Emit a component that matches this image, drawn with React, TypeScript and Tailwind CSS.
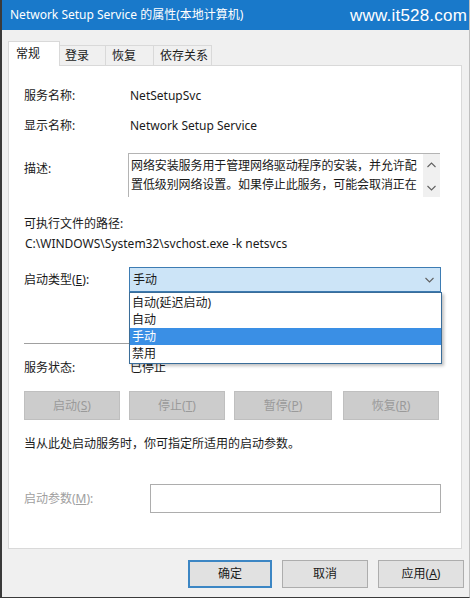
import React from 'react';

const font = "font-['Noto_Sans','Noto_Sans_CJK_SC',sans-serif]";

interface ActionButton {
    label: string;
    key: string;
    width: string;
}

const serviceButtons: ActionButton[] = [
    { label: '启动', key: 'S', width: 'w-[96px]' },
    { label: '停止', key: 'T', width: 'w-[96px]' },
    { label: '暂停', key: 'P', width: 'w-[98px]' },
    { label: '恢复', key: 'R', width: 'w-[96px]' },
];

const startupTypes = ['自动(延迟启动)', '自动', '手动', '禁用'];

const Chevron: React.FC<{ up?: boolean }> = ({ up }) => (
    <svg width="9" height="6" viewBox="0 0 9 6" className="block">
        <path
            d={up ? 'M0.5 5 L4.5 1 L8.5 5' : 'M0.5 1 L4.5 5 L8.5 1'}
            fill="none"
            stroke="#606060"
            strokeWidth="1.1"
        />
    </svg>
);

const App: React.FC = () => {
    return (
        <div className={`w-[472px] h-[598px] bg-white ${font} text-[12px] text-[#1a1a1a] leading-none`}>
            <div className="w-[470px] h-[598px] flex flex-col bg-[#f0f0f0] border-l-2 border-b border-r border-l-[#3a3a3a] border-b-[#3a3a3a] border-r-[#bfbfbf]">
                {/* title bar */}
                <div className="h-[30px] shrink-0 bg-[#1979ca] flex items-center justify-between pl-[8px] pr-[2px] text-white">
                    <span className="text-[12px]">Network Setup Service 的属性(本地计算机)</span>
                    <span className="text-[17px] font-['Liberation_Sans',sans-serif] tracking-[0.2px]">www.it528.com</span>
                </div>

                {/* tabs */}
                <div className="pl-[6px] pt-[11px] flex items-end h-[35px] shrink-0">
                    <div className="relative z-10 h-[25px] w-[52px] -mb-px bg-white border border-b-0 border-[#d9d9d9] flex items-center pl-[7px]">常规</div>
                    <div className="h-[20px] w-[46px] bg-[#f0f0f0] border border-l-0 border-b-0 border-[#d9d9d9] flex items-center pl-[5px]">登录</div>
                    <div className="h-[20px] w-[48px] bg-[#f0f0f0] border border-l-0 border-b-0 border-[#d9d9d9] flex items-center pl-[6px]">恢复</div>
                    <div className="h-[20px] w-[58px] bg-[#f0f0f0] border border-l-0 border-b-0 border-[#d9d9d9] flex items-center pl-[6px]">依存关系</div>
                </div>

                {/* panel */}
                <div className="ml-[6px] w-[454px] h-[484px] shrink-0 bg-white border border-[#d9d9d9] flex flex-col pl-[15px] pt-[20px]">
                    <div className="h-[20px] flex items-center">
                        <span className="w-[106px]">服务名称:</span>
                        <span>NetSetupSvc</span>
                    </div>
                    <div className="h-[20px] mt-[10px] flex items-center">
                        <span className="w-[106px]">显示名称:</span>
                        <span>Network Setup Service</span>
                    </div>

                    <div className="h-[44px] mt-[17px] flex">
                        <span className="w-[104px] pt-[10px]">描述:</span>
                        <div className="w-[312px] h-[44px] border-t border-l border-[#b4b4b4] flex">
                            <div className="flex-1 pl-[2px] pt-[2px] leading-[19px] text-[12px] tracking-[-0.1px]">
                                网络安装服务用于管理网络驱动程序的安装，并允许配
                                <br />
                                置低级别网络设置。如果停止此服务，可能会取消正在
                            </div>
                            <div className="w-[17px] bg-[#f0f0f0] flex flex-col items-center justify-between pt-[8px] pb-[6px]">
                                <Chevron up />
                                <Chevron />
                            </div>
                        </div>
                    </div>

                    <div className="h-[20px] mt-[17px] flex items-center">可执行文件的路径:</div>
                    <div className="h-[20px] flex items-center pl-[1px]">C:\WINDOWS\System32\svchost.exe -k netsvcs</div>

                    <div className="h-[25px] mt-[13px] flex items-center">
                        <span className="w-[105px]">
                            启动类型(<u>E</u>):
                        </span>
                        <div className="relative w-[312px] h-[25px] bg-[#cce4f7] border border-[#3d7cb3] flex items-center justify-between pl-[3px] pr-[6px]">
                            <span>手动</span>
                            <Chevron />
                            <div className="absolute z-20 left-[-1px] top-[24px] w-[313px] bg-white border border-[#3a6d99] shadow-[2px_2px_3px_rgba(0,0,0,0.25)] py-[1px]">
                                {startupTypes.map((type) => (
                                    <div
                                        key={type}
                                        className={`h-[17px] flex items-center pl-[2px] ${type === '手动' ? 'bg-[#3a8fe5] text-white' : ''}`}
                                    >
                                        {type}
                                    </div>
                                ))}
                            </div>
                        </div>
                    </div>

                    <div className="h-px w-[416px] mt-[51px] bg-[#a0a0a0]" />

                    <div className="h-[20px] mt-[14px] flex items-center">
                        <span className="w-[106px]">服务状态:</span>
                        <span>已停止</span>
                    </div>

                    <div className="h-[29px] mt-[13px] flex gap-[9px]">
                        {serviceButtons.map((b) => (
                            <div
                                key={b.key}
                                className={`${b.width} h-[29px] bg-[#cccccc] border border-[#bfbfbf] text-[#9a9a9a] flex items-center justify-center ${b.key === 'R' ? 'ml-[2px]' : ''}`}
                            >
                                {b.label}(<u>{b.key}</u>)
                            </div>
                        ))}
                    </div>

                    <div className="h-[20px] mt-[14px] flex items-center">当从此处启动服务时，你可指定所适用的启动参数。</div>

                    <div className="h-[29px] mt-[30px] flex items-center">
                        <span className="w-[126px] text-[#a0a0a0]">
                            启动参数(<u>M</u>):
                        </span>
                        <div className="w-[291px] h-[29px] border border-[#adadad] bg-white" />
                    </div>
                </div>

                {/* dialog buttons */}
                <div className="h-[28px] mt-[11px] flex justify-end gap-[10px] pr-[5px]">
                    <div className="w-[84px] h-[28px] bg-[#e1e1e1] border-2 border-[#3c86c4] flex items-center justify-center">确定</div>
                    <div className="w-[86px] h-[28px] bg-[#e1e1e1] border border-[#adadad] flex items-center justify-center">取消</div>
                    <div className="w-[86px] h-[28px] bg-[#e1e1e1] border border-[#adadad] flex items-center justify-center">
                        应用(<u>A</u>)
                    </div>
                </div>
            </div>
        </div>
    );
};

export default App;
